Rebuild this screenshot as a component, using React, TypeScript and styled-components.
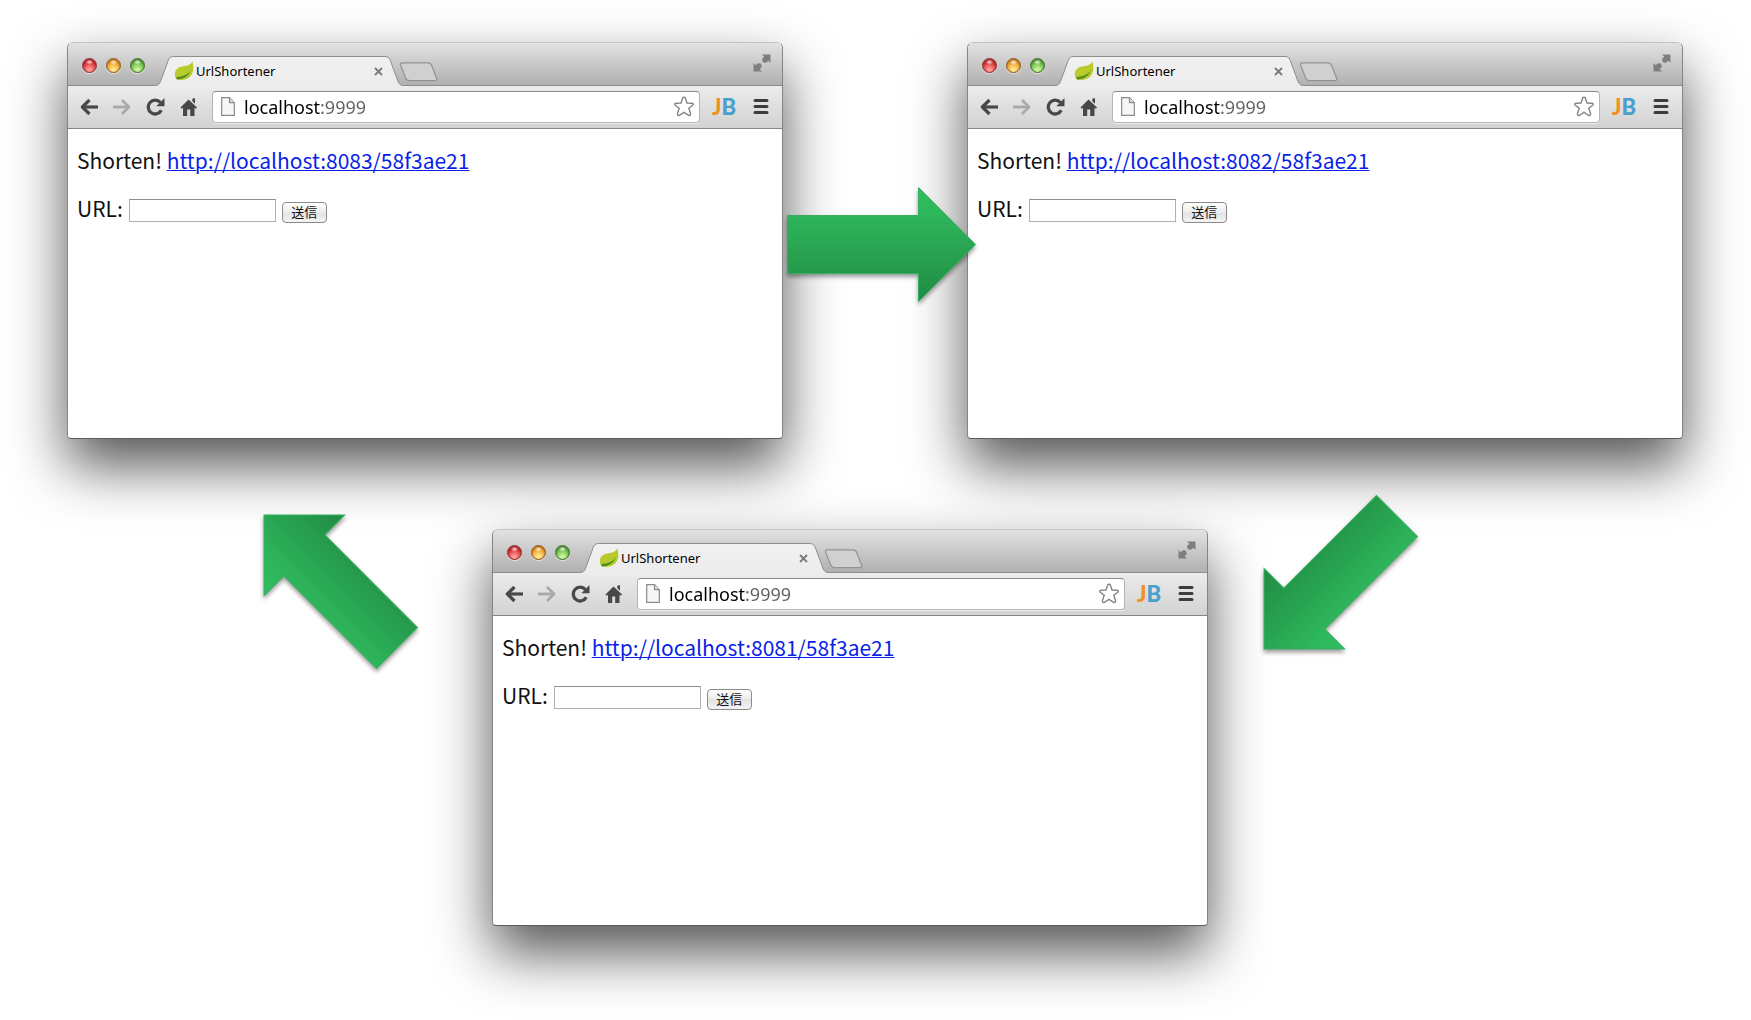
import React from "react";
import styled, { createGlobalStyle } from "styled-components";

const GlobalStyle = createGlobalStyle`
  *, *::before, *::after { box-sizing: border-box; }
  body { margin: 0; background: #fff; }
`;

const uiFont = `"Noto Sans", "Open Sans", sans-serif`;
const pageFont = `"Noto Sans CJK JP", "Liberation Sans", sans-serif`;

const Stage = styled.main`
  position: relative;
  min-height: 100vh;
  overflow: hidden;
  background: #fff;
`;

const Window = styled.section<{ $x: number; $y: number }>`
  position: absolute;
  left: ${(p) => p.$x}px;
  top: ${(p) => p.$y}px;
  width: 716px;
  min-height: 397px;
  display: flex;
  flex-direction: column;
  border: 1px solid #858585;
  border-top-color: #c4c4c4;
  border-bottom-color: #5c5c5c;
  border-radius: 6px 6px 4px 4px;
  background: #fff;
  box-shadow: 0 27px 56px rgba(0, 0, 0, 0.67);
`;

const TitleBar = styled.header`
  display: flex;
  align-items: flex-end;
  height: 43px;
  padding: 0 11px 0 14px;
  border-radius: 5px 5px 0 0;
  border-bottom: 1px solid #8e8e8e;
  background: linear-gradient(#e2e2e2, #b0b0b0);
`;

const Lights = styled.div`
  display: flex;
  gap: 9px;
  padding-bottom: 12px;
`;

const Light = styled.button<{ $rim: string; $body: string; $glow: string }>`
  width: 15px;
  height: 15px;
  padding: 0;
  border: 1px solid ${(p) => p.$rim};
  border-radius: 50%;
  background:
    radial-gradient(ellipse 4px 3px at 50% 22%, rgba(255, 255, 255, 0.9), transparent),
    radial-gradient(circle at 50% 85%, ${(p) => p.$glow} 10%, ${(p) => p.$body} 65%);
  box-shadow: 0 1px 1px rgba(255, 255, 255, 0.6), inset 0 1px 2px ${(p) => p.$rim};
`;

const Tab = styled.div`
  position: relative;
  display: flex;
  align-items: center;
  width: 249px;
  height: 30px;
  margin: 0 0 -1px 10px;
  padding: 0 21px 0 19px;
`;

const TabShape = styled.svg`
  position: absolute;
  inset: 0;
`;

const TabTitle = styled.span`
  position: relative;
  flex: 1;
  margin-left: 2px;
  font: 13px/18px ${uiFont};
  color: #000;
`;

const IconButton = styled.button`
  position: relative;
  display: flex;
  flex: none;
  padding: 0;
  border: 0;
  background: none;
`;

const Favicon = styled.svg`
  position: relative;
  flex: none;
`;

const NewTab = styled(IconButton)`
  margin: 0 0 3px -5px;
`;

const FullScreen = styled(IconButton)`
  margin: 0 0 13px auto;
`;

const Toolbar = styled.div`
  display: flex;
  align-items: center;
  height: 43px;
  padding: 0 13px 1px 12px;
  border-bottom: 1px solid #858585;
  background: linear-gradient(#ececec, #d2d2d2);
`;

const Nav = styled.nav`
  display: flex;
  gap: 15px;
  margin-right: 14px;
`;

const Omnibox = styled.div`
  display: flex;
  flex: 1;
  align-items: center;
  height: 32px;
  padding: 0 5px 0 8px;
  border: 1px solid #b4b4b4;
  border-top-color: #8c8c8c;
  border-radius: 4px;
  background: #fff;
  box-shadow: 0 1px 0 rgba(255, 255, 255, 0.6);
`;

const Address = styled.input`
  flex: 1;
  min-width: 0;
  height: 26px;
  margin-left: 9px;
  padding: 0;
  border: 0;
  outline: 0;
  font: 18px/26px ${uiFont};
  color: transparent;
  background: linear-gradient(90deg, #000 77px, #606060 77px);
  background-clip: text;
  -webkit-background-clip: text;
`;

const Extension = styled.button`
  margin: 0 17px 0 12px;
  padding: 0;
  border: 0;
  background: none;
  font: 900 22px/26px Lato, sans-serif;
  color: #ef9320;

  span { color: #4aa0cc; }
`;

const Page = styled.div`
  flex: 1;
  padding: 15px 9px;
  font: 21px/32px ${pageFont};
  color: #111;
`;

const Result = styled.p`
  margin: 0 0 16px;
`;

const ShortLink = styled.a`
  color: #0a1fe8;
  text-decoration: underline;
  text-underline-offset: 1px;
  text-decoration-thickness: 1px;
`;

const Form = styled.form`
  display: flex;
  align-items: center;
  gap: 6px;
`;

const Label = styled.label`
  min-width: 45px;
  white-space: nowrap;
`;

const UrlField = styled.input`
  width: 147px;
  height: 23px;
  margin-top: 4px;
  padding: 0 3px;
  border: 1px solid #b0b0b0;
  border-top-color: #8e8e8e;
  background: #fff;
  font: 13px/20px ${pageFont};
`;

const Submit = styled.button`
  width: 45px;
  height: 21px;
  margin-top: 8px;
  padding: 0;
  border: 1px solid #8a8a8a;
  border-radius: 4px;
  background: linear-gradient(#fefefe, #ececec 50%, #e2e2e2 50%, #f4f4f4);
  font: 13px/18px ${pageFont};
  color: #111;
`;

const ArrowBox = styled.div<{ $x: number; $y: number; $turn: number }>`
  position: absolute;
  left: ${(p) => p.$x}px;
  top: ${(p) => p.$y}px;
  filter: drop-shadow(0 3px 2px rgba(0, 0, 0, 0.38));

  svg {
    display: block;
    overflow: visible;
    transform: rotate(${(p) => p.$turn}deg);
  }
`;

function Leaf() {
  return (
    <Favicon width="20" height="20" viewBox="0 0 20 20" aria-hidden="true">
      <path d="M18.400 .5C19.600 5 20 9 18 13C15.500 17.500 9 19.500 3.200 18.600C1 17 .2 13 1.300 10.500C3 6.500 7 5.500 11 5.100C14.500 4.700 17 3 18.400 .5Z" fill="#b9cb2c" />
      <path d="M17 8C15.500 13 10.500 15.200 2.300 16.100L3 18.500C10 18 15.500 15 17 8Z" fill="#4d8c1f" />
      <path d="M17.600 9.500C16.500 14.500 11.500 17.600 5.500 18.700C9.500 19.200 13.500 18 16 15.500C17.400 14 18 11.400 17.600 9.500Z" fill="#b9cb2c" />
    </Favicon>
  );
}

const INK = "#484848";

function Browser({ x, y, port }: { x: number; y: number; port: number }) {
  const short = `http://localhost:${port}/58f3ae21`;
  const fieldId = `url-${port}`;
  return (
    <Window $x={x} $y={y}>
      <TitleBar>
        <Lights>
          <Light aria-label="Close" $rim="#8e2f2c" $body="#d9262c" $glow="#ff9c98" />
          <Light aria-label="Minimize" $rim="#93591c" $body="#ee9b25" $glow="#ffe98c" />
          <Light aria-label="Zoom" $rim="#42702c" $body="#62b53c" $glow="#c8f59c" />
        </Lights>
        <Tab>
          <TabShape width="249" height="30" viewBox="0 0 249 30" aria-hidden="true">
            <defs>
              <linearGradient id={`tab-${port}`} x2="0" y2="1">
                <stop offset="0" stopColor="#f1f1f1" />
                <stop offset="1" stopColor="#ececec" />
              </linearGradient>
            </defs>
            <path d="M0 30V29.500C3 29.500 4.500 28 5.500 25.500L13 5C14 2 15.500 .5 18.500 .5H230C233 .5 234.500 2 235.500 5L243 25.500C244 28 245.500 29.500 248.500 29.500V30Z" fill={`url(#tab-${port})`} />
            <path d="M0 29.500C3 29.500 4.500 28 5.500 25.500L13 5C14 2 15.500 .5 18.500 .5H230C233 .5 234.500 2 235.500 5L243 25.500C244 28 245.500 29.500 248.500 29.500" fill="none" stroke="#8e8e8e" />
          </TabShape>
          <Leaf />
          <TabTitle>UrlShortener</TabTitle>
          <IconButton aria-label="Close tab">
            <svg width="9" height="9" viewBox="0 0 9 9">
              <path d="M1 1L8 8M8 1L1 8" stroke="#7a7a7a" strokeWidth="1.800" />
            </svg>
          </IconButton>
        </Tab>
        <NewTab aria-label="New tab">
          <svg width="40" height="20" viewBox="0 0 40 20">
            <path d="M3.500 .8H29C31 .8 32 1.500 32.700 3.500L37.500 16C38.300 18 37.500 18.700 35.500 18.700H11C8.500 18.700 7.500 18 6.700 16L1.700 3.500C1 1.500 1.500 .8 3.500 .8Z" fill="#d0d0d0" stroke="#939393" strokeWidth="1.200" />
          </svg>
        </NewTab>
        <FullScreen aria-label="Full screen">
          <svg width="18" height="18" viewBox="0 0 18 18" fill="#7e7e7e">
            <path d="M9 .5H17.500V9L15.300 6.800Q13.500 9.500 10.500 8.500Q8.300 6 9.600 4.300L11.300 2.800Z" />
            <path d="M.5 9V17.500H9L6.700 15.200L8.300 13.600Q9.600 12 7.500 9.500Q4.500 8.500 2.700 11.200Z" />
          </svg>
        </FullScreen>
      </TitleBar>
      <Toolbar>
        <Nav>
          <IconButton aria-label="Back">
            <svg width="18" height="18" viewBox="0 0 18 18" fill="none" stroke={INK}>
              <path d="M2.500 9H18" strokeWidth="3.200" />
              <path d="M9.500 2L2.300 9L9.500 16" strokeWidth="3.200" strokeLinejoin="round" />
            </svg>
          </IconButton>
          <IconButton aria-label="Forward">
            <svg width="18" height="18" viewBox="0 0 18 18" fill="none" stroke="#a9a9a9">
              <path d="M0 9H15.500" strokeWidth="2.800" />
              <path d="M9 2L16 9L9 16" strokeWidth="2.800" strokeLinejoin="round" />
            </svg>
          </IconButton>
          <IconButton aria-label="Reload">
            <svg width="19" height="18" viewBox="0 0 19 18" fill="none">
              <path d="M14.300 4.400A6.900 6.900 0 1 0 15.300 12.300" stroke={INK} strokeWidth="3.300" />
              <path d="M18.500 0V8.200H10.300Z" fill={INK} />
            </svg>
          </IconButton>
          <IconButton aria-label="Home">
            <svg width="18" height="18" viewBox="0 0 18 18" fill={INK}>
              <path d="M8.500 1.500L.5 9.500L1.700 10.700L3 9.700V18H7.200V11.500H10.200V18H14.500V9.700L15.800 10.700L17 9.500Z" />
              <path d="M12.300 .8L15 0V5.800L12.300 3.200Z" />
            </svg>
          </IconButton>
        </Nav>
        <Omnibox>
          <svg width="14" height="19" viewBox="0 0 14 19" aria-hidden="true">
            <path d="M.7 .7H8.500L13.300 5.700V18.300H.7Z" fill="#f7f7f7" stroke="#8a8a8a" strokeWidth="1.200" />
            <path d="M8.500 .7V5.700H13.300" fill="#ddd" stroke="#8a8a8a" strokeWidth="1.200" />
          </svg>
          <Address type="text" aria-label="Address" defaultValue="localhost:9999" spellCheck={false} />
          <IconButton aria-label="Bookmark">
            <svg width="20" height="21" viewBox="0 0 20 21">
              <path d="M10 1.200Q11 1.200 11.400 2.200L13 7L18 7.200Q20.200 7.700 18.700 9.200L14.800 12.300L16.500 17.500Q16.800 20.200 14.600 19.300L10 16.300L5.400 19.300Q3.200 20.200 3.500 17.500L5.200 12.300L1.300 9.200Q-.2 7.700 2 7.200L7 7L8.600 2.200Q9 1.200 10 1.200Z" fill="#fff" stroke="#858585" strokeWidth="1.400" />
            </svg>
          </IconButton>
        </Omnibox>
        <Extension aria-label="JB extension">J<span>B</span></Extension>
        <IconButton aria-label="Menu">
          <svg width="16" height="17" viewBox="0 0 16 17" stroke="#3c3c3c" strokeWidth="3" strokeLinecap="round">
            <path d="M2 2.500H14M2 8.500H14M2 14.500H14" />
          </svg>
        </IconButton>
      </Toolbar>
      <Page>
        <Result>
          Shorten! <ShortLink href={short}>{short}</ShortLink>
        </Result>
        <Form onSubmit={(e) => e.preventDefault()}>
          <Label htmlFor={fieldId}>URL:</Label>
          <UrlField id={fieldId} type="text" />
          <Submit type="submit">送信</Submit>
        </Form>
      </Page>
    </Window>
  );
}

function Arrow({ x, y, turn = 0 }: { x: number; y: number; turn?: number }) {
  const fillId = `arrow-${x}`;
  return (
    <ArrowBox $x={x} $y={y} $turn={turn} aria-hidden="true">
      <svg width="189" height="115" viewBox="0 0 189 115">
        <defs>
          <linearGradient id={fillId} x2="0" y2="1">
            <stop offset="0" stopColor="#2fbd60" />
            <stop offset=".2" stopColor="#2eb85c" />
            <stop offset="1" stopColor="#218a43" />
          </linearGradient>
        </defs>
        <path d="M.5 28.500H131.500V.5L188.500 57.500L131.500 114.500V86.500H.5Z" fill={`url(#${fillId})`} stroke="#36b060" />
      </svg>
    </ArrowBox>
  );
}

export default function App() {
  return (
    <>
      <GlobalStyle />
      <Stage>
        <Browser x={67} y={42} port={8083} />
        <Browser x={967} y={42} port={8082} />
        <Browser x={492} y={529} port={8081} />
        <Arrow x={787} y={187} />
        <Arrow x={1236} y={525} turn={135} />
        <Arrow x={236} y={524} turn={-135} />
      </Stage>
    </>
  );
}
